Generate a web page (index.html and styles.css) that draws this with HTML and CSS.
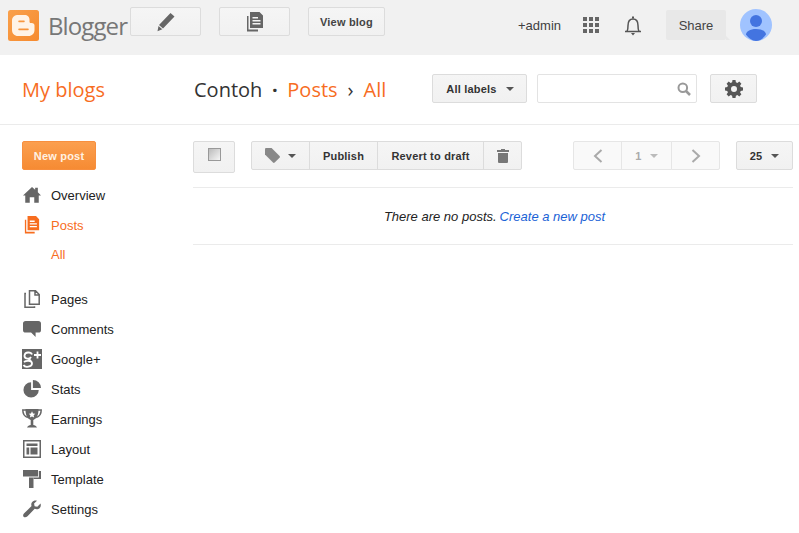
FILE: index.html
```html
<!DOCTYPE html>
<html lang="en">
<head>
<meta charset="utf-8">
<title>Blogger: Posts</title>
<link rel="stylesheet" href="styles.css">
</head>
<body>
<header class="topbar">
  <div class="brand">
    <svg class="logo" width="31" height="31" viewBox="0 0 31 31"><defs><linearGradient id="lg" x1="0" y1="0" x2="1" y2="1"><stop offset="0" stop-color="#f9a04b"/><stop offset="1" stop-color="#f68a2e"/></linearGradient></defs><rect width="31" height="31" rx="2.5" fill="url(#lg)"/><path fill-rule="evenodd" fill="#fff3e6" d="M10.500 5h6c3 0 5 2 5 4.700v2c0 .8.6 1.300 1.300 1.300h.7c2 0 3 1 3 2.500v4.500c0 3.500-2.500 6-6 6h-10.500c-3.500 0-6-2.500-6-6v-9.500c0-3.500 2.500-5.500 6.500-5.500zM11 10.500h5c1 0 1 1.700 0 1.700h-5c-1 0-1-1.700 0-1.700zM11 18.500h9c1 0 1 1.700 0 1.700h-9c-1 0-1-1.700 0-1.700z"/></svg>
    <span class="wordmark">Blogger</span>
  </div>
  <a class="tbtn tbtn-icon">
    <svg width="20" height="20" viewBox="0 0 20 20"><path fill="#666" d="M14.500 1l4 3.500-11.500 12-4-3.500zM2.500 14l3.800 3.300-4.800 2z"/></svg>
  </a>
  <a class="tbtn tbtn-icon tbtn-second">
    <svg width="18" height="20" viewBox="0 0 18 20"><use href="#i-posts" fill="#666"/></svg>
  </a>
  <a class="tbtn tbtn-view">View blog</a>
  <div class="spacer"></div>
  <span class="plus">+admin</span>
  <svg class="apps" width="16" height="16" viewBox="0 0 16 16" fill="#666"><rect width="4" height="4"/><rect x="6" width="4" height="4"/><rect x="12" width="4" height="4"/><rect y="6" width="4" height="4"/><rect x="6" y="6" width="4" height="4"/><rect x="12" y="6" width="4" height="4"/><rect y="12" width="4" height="4"/><rect x="6" y="12" width="4" height="4"/><rect x="12" y="12" width="4" height="4"/></svg>
  <svg class="bell" width="18" height="21" viewBox="0 0 18 21"><path fill="none" stroke="#555" stroke-width="1.500" d="M1 16.500h16M3 16.500c1-1.500 1-3 1-6 0-4 2-6.500 5-6.500s5 2.500 5 6.500c0 3 0 4.500 1 6"/><path fill="#555" d="M8 1.500h2v2h-2zM7 18h4l-2 2.500z"/></svg>
  <div class="share">Share</div>
  <svg class="avatar" width="32" height="32" viewBox="0 0 32 32"><circle cx="16" cy="16" r="16" fill="#a0c3ff"/><circle cx="16" cy="12" r="6" fill="#4374e0"/><path fill="#4374e0" d="M16 20c-6 0-10 2.500-10 5.500 2.500 3.500 6 6.500 10 6.500s7.500-3 10-6.500c0-3-4-5.500-10-5.500z"/></svg>
</header>

<div class="titlebar">
  <a class="myblogs">My blogs</a>
  <div class="crumbs"><span class="blogname">Contoh</span><span class="dot">·</span><a>Posts</a><span class="sep">›</span><a>All</a></div>
  <div class="spacer"></div>
  <button class="btn labels">All labels<i class="caret caret-dark"></i></button>
  <div class="search">
    <svg width="14" height="14" viewBox="0 0 14 14"><circle cx="5.800" cy="5.800" r="4.300" fill="none" stroke="#999" stroke-width="2"/><path stroke="#999" stroke-width="2.500" d="M9 9l4 4"/></svg>
  </div>
  <button class="btn gear">
    <svg width="18" height="18" viewBox="0 0 18 18"><path fill="#555" fill-rule="evenodd" d="M7.500 0h3l.4 2.300 1.500.6 1.900-1.300 2.100 2.100-1.300 1.900.6 1.500 2.300.4v3l-2.300.4-.6 1.500 1.300 1.900-2.100 2.100-1.900-1.300-1.500.6-.4 2.300h-3l-.4-2.300-1.500-.6-1.900 1.300-2.100-2.100 1.300-1.900-.6-1.500L0 10.500v-3l2.300-.4.600-1.500L1.600 3.700l2.100-2.100 1.900 1.300 1.500-.6zM9 6a3 3 0 1 0 0 6 3 3 0 0 0 0-6z"/></svg>
  </button>
</div>

<div class="layout">
  <nav class="sidebar">
    <button class="newpost">New post</button>
    <ul class="menu">
      <li class="item"><svg width="18" height="17" viewBox="0 0 20 18"><path fill="#666" d="M10 0l3.500 3.200V1h3v5l3.500 3.500h-2.500V17.500h-5V11.500h-5v6h-5V9.500H0z"/></svg>Overview</li>
      <li class="item active"><svg width="16" height="18" viewBox="0 0 18 20"><use href="#i-posts" fill="#f76d1f"/></svg>Posts</li>
      <li class="item sub active">All</li>
      <li class="item gap"><svg width="16" height="18" viewBox="0 0 16 18"><path fill="none" stroke="#666" stroke-width="1.500" d="M5.500.8h6l3.700 3.700v9.700H5.500zM11 1v4h4"/><path fill="none" stroke="#666" stroke-width="1.500" d="M2 3.500H1v13.700h9.500v-1"/></svg>Pages</li>
      <li class="item"><svg width="18" height="18" viewBox="0 0 20 18"><path fill="#666" d="M3 0h14c2 0 3 1 3 3v7c0 2-1 3-3 3h-3v5l-5-5H3c-2 0-3-1-3-3V3c0-2 1-3 3-3z"/></svg>Comments</li>
      <li class="item"><svg width="20" height="20" viewBox="0 0 20 20"><rect width="20" height="20" fill="#666"/><path fill="none" stroke="#fff" stroke-width="1.800" d="M10 5.500C9 2.800 3 2.500 2.500 6.500 2.200 10 7.500 10.800 9 8M2 13c2-1.500 8-1.800 8 1.500 0 3.500-7 4.500-8.500 1.500M7.500 9.500c-1.500 1 1 1.500 1.500 3"/><path stroke="#fff" stroke-width="1.800" d="M15.500 2.500v7M12 6h7"/></svg>Google+</li>
      <li class="item"><svg width="18" height="18" viewBox="0 0 20 20"><path fill="#666" d="M9 2.500V11h8.500A8.500 8.500 0 1 1 9 2.500zM11 0a9 9 0 0 1 9 9h-9z"/></svg>Stats</li>
      <li class="item"><svg width="20" height="20" viewBox="0 0 20 20"><path fill="none" stroke="#666" stroke-width="1.500" d="M4 1H.8c0 4 1.500 6.500 5 7.500M16 1h3.200c0 4-1.500 6.500-5 7.500"/><path fill="#666" fill-rule="evenodd" d="M3.500 0h13c0 6-1.500 9.500-5.200 11v5c1.500.3 3 .8 3.700 2.500H5c.7-1.700 2.200-2.200 3.700-2.500v-5C5 9.500 3.500 6 3.500 0zM10 2.300l-1 2.200-2.300.2 1.700 1.600-.5 2.300 2.100-1.200 2.100 1.200-.5-2.300 1.700-1.600-2.300-.2z"/></svg>Earnings</li>
      <li class="item"><svg width="18" height="18" viewBox="0 0 18 18"><path fill="#666" fill-rule="evenodd" d="M0 0h18v18H0zM1.500 1.500v15h15v-15z"/><path fill="#666" d="M3.500 3.500h11v2.500h-11zM3.500 7.500h2.700v7H3.500zM7.500 7.500h7v7h-7z"/></svg>Layout</li>
      <li class="item"><svg width="18" height="18" viewBox="0 0 18 18"><path fill="#666" d="M0 0h15v6.500H0zM15.800 1H18v8H10.500v-1.500h5.300z"/><path fill="#666" d="M6 7.500h4.500V18H6z"/></svg>Template</li>
      <li class="item"><svg width="18" height="18" viewBox="0 0 20 19"><path fill="#666" d="M19.500 3.500c.8 2.500-.2 5-2.500 6-1.500.6-2.800.4-4-.2L5 17.500c-1.500 1.500-3.300 1.600-4.300.6s-.6-2.500.6-3.800l8.200-8C9 5 9 3.300 10 2c1.300-1.700 3.500-2.300 5.500-1.700L12.300 3.500l.6 3 3 .6z"/></svg>Settings</li>
    </ul>
  </nav>

  <main class="content">
    <div class="toolbar">
      <button class="btn check"><span class="box"></span></button>
      <div class="group">
        <button class="btn seg tag"><svg width="15" height="15" viewBox="0 0 16 16"><path fill="#888" d="M0 1.500C0 .5.500 0 1.500 0H7l8.500 8.500c.6.600.6 1.200 0 1.800l-5.200 5.200c-.6.600-1.200.6-1.800 0L0 7z"/></svg><i class="caret caret-dark"></i></button>
        <button class="btn seg publish">Publish</button>
        <button class="btn seg revert">Revert to draft</button>
        <button class="btn seg trash"><svg width="12" height="14" viewBox="0 0 12 14"><path fill="#777" d="M4 0h4v1h4v2H0V1h4zM1 4h10v8.500c0 1-.5 1.500-1.500 1.500h-7c-1 0-1.500-.5-1.500-1.500z"/></svg></button>
      </div>
      <div class="spacer"></div>
      <div class="group pager">
        <button class="btn seg prev"><svg width="10" height="14" viewBox="0 0 10 14"><path fill="none" stroke="#aaa" stroke-width="2" d="M8.500 1L2 7l6.500 6"/></svg></button>
        <button class="btn seg page">1<i class="caret caret-light"></i></button>
        <button class="btn seg next"><svg width="10" height="14" viewBox="0 0 10 14"><path fill="none" stroke="#aaa" stroke-width="2" d="M1.500 1L8 7l-6.500 6"/></svg></button>
      </div>
      <button class="btn perpage">25<i class="caret caret-dark"></i></button>
    </div>
    <div class="empty"><em>There are no posts.</em> <a>Create a new post</a></div>
  </main>
</div>

<svg class="defs" width="0" height="0"><defs><symbol id="i-posts" viewBox="0 0 18 20"><path fill-rule="evenodd" d="M4 0h9.500L17 3.500V16H4zM6.500 5v1.500H12V5zM6.500 8v1.500h8V8zM6.500 11v1.500h8V11z"/><path d="M1 4h1.500v13.500H12V19.500H1z"/></symbol></defs></svg>
</body>
</html>
```
FILE: styles.css
```css
* { box-sizing: border-box; }
html, body { margin: 0; padding: 0; }
body { font-family: "Liberation Sans", Arial, sans-serif; color: #222; background: #fff; width: 799px; height: 533px; overflow: hidden; }
a { text-decoration: none; }
.spacer { flex: 1; }
.defs { position: absolute; }

.topbar { height: 55px; background: #f1f1f1; display: flex; align-items: flex-start; padding-left: 8px; }
.brand { display: flex; align-items: flex-start; width: 122px; padding-top: 10px; }
.logo { flex: none; }
.wordmark { font: 500 24px/32px "Open Sans", sans-serif; color: #777; margin-left: 9px; letter-spacing: -.9px; }
.tbtn { display: flex; align-items: center; justify-content: center; height: 29px; margin-top: 7px; border: 1px solid #dcdcdc; border-radius: 2px; background: linear-gradient(#f5f5f5, #f1f1f1); font: bold 11px "Liberation Sans", Arial, sans-serif; letter-spacing: .2px; color: #444; }
.tbtn-icon { width: 71px; }
.tbtn-second { margin-left: 18px; }
.tbtn-view { width: 77px; margin-left: 18px; }
.plus { font-size: 13px; line-height: 16px; color: #404040; margin-top: 18px; margin-right: 22px; }
.apps { margin-top: 17px; margin-right: 25px; }
.bell { margin-top: 15px; margin-right: 24px; }
.share { position: relative; width: 60px; height: 30px; margin-top: 10px; margin-right: 14px; background: #e8e8e8; border-radius: 2px; font-size: 13px; line-height: 31px; text-align: center; color: #444; }
.share::after { content: ""; position: absolute; right: -4px; bottom: 0; border-left: 4px solid #e8e8e8; border-top: 4px solid transparent; }
.avatar { margin-top: 9px; margin-right: 27px; }

.titlebar { height: 70px; border-bottom: 1px solid #ebebeb; display: flex; align-items: flex-start; padding-left: 22px; padding-right: 42px; }
.myblogs { width: 172px; font: 20px/28px "Open Sans", sans-serif; color: #f76d1f; margin-top: 21px; }
.crumbs { display: flex; font: 20px/28px "Open Sans", sans-serif; color: #f76d1f; margin-top: 21px; }
.blogname { color: #333; }
.dot { color: #333; width: 25px; text-align: center; font-weight: bold; }
.sep { color: #333; width: 26px; text-align: center; }

.btn { display: inline-flex; align-items: center; justify-content: center; height: 29px; padding: 0; border: 1px solid #dcdcdc; border-radius: 2px; background: linear-gradient(#f5f5f5, #f1f1f1); font: bold 11px "Liberation Sans", Arial, sans-serif; letter-spacing: .2px; color: #333; }
.labels { width: 95px; margin-top: 19px; padding: 1px 0 0 1px; }
.caret { display: inline-block; width: 0; height: 0; border-left: 4px solid transparent; border-right: 4px solid transparent; }
.caret-dark { border-top: 4px solid #555; }
.caret-light { border-top: 4px solid #bbb; }
.labels .caret { margin-left: 9px; }
.search { display: flex; align-items: center; justify-content: flex-end; width: 160px; height: 29px; margin-top: 19px; margin-left: 10px; padding-right: 5px; border: 1px solid #e3e3e3; border-radius: 2px; }
.gear { width: 47px; margin-top: 19px; margin-left: 13px; }

.layout { display: flex; }
.sidebar { width: 193px; padding: 16px 0 0 22px; }
.newpost { display: block; width: 74px; height: 29px; padding: 0; border: 1px solid #f78f3f; border-radius: 2px; background: linear-gradient(#fb9f4f, #f68b33); font: bold 11px "Liberation Sans", Arial, sans-serif; letter-spacing: .2px; color: #fff2e3; }
.menu { list-style: none; margin: 10px 0 0; padding: 0; }
.item { display: flex; align-items: center; height: 30px; padding-left: 29px; position: relative; font-size: 13px; color: #222; }
.item svg { position: absolute; left: 10px; top: 50%; transform: translate(-50%, -50%); }
.item.active { color: #f76d1f; }
.item.sub { height: 29px; }
.item.gap { margin-top: 15px; }

.content { width: 600px; padding-top: 16px; }
.toolbar { display: flex; align-items: flex-start; height: 47px; border-bottom: 1px solid #ebebeb; }
.check { width: 42px; height: 32px; align-items: flex-start; padding-top: 6px; }
.box { display: block; width: 13px; height: 13px; border: 1px solid #999; background: linear-gradient(135deg, #bbb, #f6f6f6); }
.group { display: flex; }
.toolbar > .group:first-of-type { margin-left: 16px; }
.seg { border-radius: 0; margin-left: -1px; }
.seg:first-child { border-radius: 2px 0 0 2px; margin-left: 0; }
.seg:last-child { border-radius: 0 2px 2px 0; }
.tag { width: 59px; gap: 8px; }
.publish { width: 69px; }
.revert { width: 107px; }
.trash { width: 39px; }
.pager .btn { background: #f9f9f9; border-color: #e6e6e6; color: #aaa; }
.prev { width: 49px; }
.page { width: 51px; gap: 8px; }
.next { width: 49px; }
.perpage { width: 57px; margin-left: 16px; gap: 9px; }
.empty { height: 57px; padding-left: 3px; border-bottom: 1px solid #ebebeb; display: flex; align-items: center; justify-content: center; gap: 3px; font-size: 13px; color: #222; }
.empty a { font-style: italic; color: #1a62d6; }
```
